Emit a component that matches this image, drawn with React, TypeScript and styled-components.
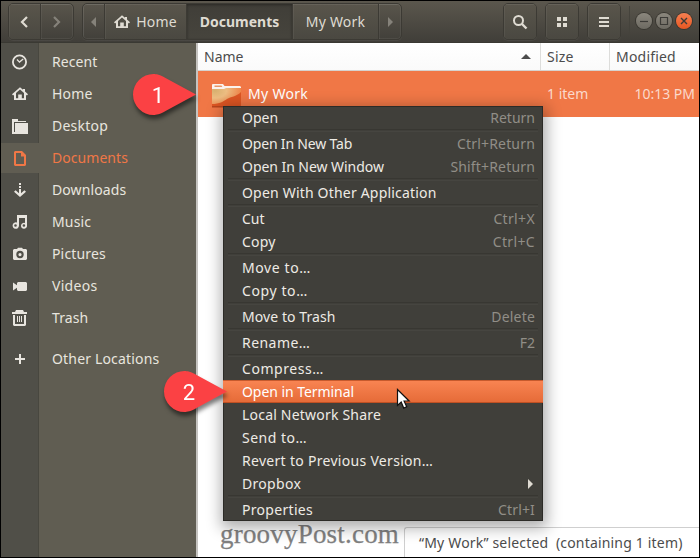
import React from 'react';
import styled, { createGlobalStyle, css } from 'styled-components';

const Global = createGlobalStyle`
  * { box-sizing: border-box; }
  body { margin: 0; background: #000; }
`;

const Frame = styled.div`
  position: relative;
  width: 700px;
  height: 558px;
  padding: 1px;
  background: #000;
  overflow: hidden;
  display: flex;
  flex-direction: column;
  font-family: 'Noto Sans', sans-serif;
  font-size: 14px;
  color: #4c4c4c;
  white-space: pre;
  cursor: default;
`;

const HeaderBar = styled.header`
  flex: none;
  height: 42px;
  display: flex;
  align-items: flex-start;
  padding: 2px 7px 0 7px;
  background: linear-gradient(#5b574d, #403e39);
  border-bottom: 1px solid #3a3933;
  color: #dfdbd2;
`;

const ButtonGroup = styled.div<{ $left?: number }>`
  display: flex;
  height: 37px;
  margin-left: ${(p) => p.$left ?? 0}px;
  border: 1px solid #3c3a34;
  border-radius: 5px;
  box-shadow: inset 0 0 0 1px rgba(255, 255, 255, 0.06), 0 1px 0 rgba(255, 255, 255, 0.05);
  overflow: hidden;
`;

const HeaderButton = styled.button<{ $w: number; $tone?: 'raised' | 'active' | 'flat' }>`
  width: ${(p) => p.$w}px;
  height: 35px;
  padding: 0;
  border: 0;
  border-right: 1px solid #3c3a34;
  display: flex;
  align-items: center;
  justify-content: center;
  gap: 6px;
  font: inherit;
  color: #dfdbd2;
  background: ${(p) => (p.$tone === 'flat' ? 'transparent' : 'linear-gradient(#59554b, #4a4841)')};
  box-shadow: inset 0 1px 0 rgba(255, 255, 255, 0.08), inset 1px 0 0 rgba(255, 255, 255, 0.05);
  &:last-child { border-right: 0; }
  ${(p) => p.$tone === 'active' && css`
    font-weight: 700;
    background: linear-gradient(#403e38, #46443d);
    box-shadow: inset 0 1px 3px rgba(0, 0, 0, 0.35);
  `}
`;

const Label = styled.span<{ $ls?: number }>`
  letter-spacing: ${(p) => p.$ls ?? 0}px;
  line-height: 20px;
`;

const Spacer = styled.div`
  flex: 1;
`;

const WindowControls = styled.div`
  display: flex;
  align-items: center;
  gap: 4px;
  height: 30px;
  margin: 3px 0 0 8px;
  padding-left: 6px;
  border-left: 1px solid #45433c;
`;

const ControlButton = styled.span<{ $close?: boolean }>`
  width: 16px;
  height: 16px;
  border-radius: 50%;
  background: ${(p) => (p.$close ? 'linear-gradient(#f77f51, #e65722)' : 'linear-gradient(#8b877d, #6d6a62)')};
  box-shadow: 0 0 0 1px #393731;
  display: flex;
`;

const Body = styled.div`
  flex: none;
  height: 514px;
  display: flex;
`;

const Sidebar = styled.nav`
  width: 195px;
  flex: none;
  padding-top: 4px;
  display: flex;
  flex-direction: column;
  gap: 2px;
  background: linear-gradient(90deg, #504f48 37px, #48473f 37px, #48473f 38px, #605d52 38px);
`;

const Place = styled.a<{ $selected?: boolean; $top?: number }>`
  height: 30px;
  margin-top: ${(p) => p.$top ?? 0}px;
  display: flex;
  align-items: center;
  color: ${(p) => (p.$selected ? '#f07746' : '#e8e5df')};
  background: ${(p) => (p.$selected ? '#605d52' : 'transparent')};
  svg { margin: 0 24px 0 11px; flex: none; }
`;

const Content = styled.main`
  flex: 1;
  min-width: 0;
  border-left: 2px solid #c5c3c0;
  background: #fff;
  display: flex;
  flex-direction: column;
`;

const Columns = styled.div`
  height: 28px;
  flex: none;
  display: grid;
  grid-template-columns: 343px 69px 1fr;
  border-bottom: 1px solid #d6d3cf;
  background: linear-gradient(#fff, #fafafa);
`;

const Column = styled.div`
  display: flex;
  align-items: center;
  justify-content: space-between;
  padding: 0 9px 0 6px;
  border-right: 1px solid #dddddb;
  &:last-child { border-right: 0; }
`;

const FileRow = styled.div`
  height: 46px;
  flex: none;
  display: grid;
  grid-template-columns: 343px 69px 1fr;
  align-items: center;
  background: #f07746;
  color: #fff;
`;

const FileName = styled.div`
  display: flex;
  align-items: center;
  padding-left: 13px;
  gap: 5px;
`;

const FileMeta = styled.div<{ $right?: boolean }>`
  color: #fbd9cb;
  padding-left: 6px;
  padding-right: 4px;
  text-align: ${(p) => (p.$right ? 'right' : 'left')};
`;

const Bottom = styled.div`
  flex: 1;
  display: flex;
  align-items: flex-end;
`;

const Watermark = styled.div`
  width: 206px;
  padding: 0 0 6px 22px;
  font-family: 'Liberation Serif', serif;
  font-size: 27px;
  letter-spacing: 0.2px;
  line-height: 34px;
  color: #808080;
  -webkit-text-stroke: 0.25px #808080;
`;

const StatusBar = styled.div`
  flex: 1;
  height: 30px;
  border-top: 1px solid #cfcfcf;
  border-left: 1px solid #cfcfcf;
  border-top-left-radius: 3px;
  padding: 5px 0 0 14px;
`;

const Menu = styled.div`
  position: absolute;
  left: 223px;
  top: 106px;
  width: 320px;
  isolation: isolate;
  background: #403f3a;
  box-shadow: 1px 4px 14px 3px rgba(0, 0, 0, 0.32);
  &::after {
    content: '';
    position: absolute;
    inset: 0;
    border: 1px solid rgba(38, 37, 33, 0.75);
    pointer-events: none;
  }
`;

const MenuItem = styled.div<{ $active?: boolean }>`
  height: 23px;
  display: flex;
  align-items: center;
  justify-content: space-between;
  padding: 0 8px 0 19px;
  color: #eeebe5;
  ${(p) => p.$active && css`
    color: #fff;
    background: linear-gradient(#f98553, #e56a37);
    box-shadow: inset 0 1px 0 #c65a2d, inset 0 -1px 0 #c05023;
    position: relative;
    z-index: 1;
  `}
`;

const Shortcut = styled(Label)`
  color: #918e87;
`;

const Separator = styled.div`
  height: 3px;
  margin: 0 5px;
  border-top: 1px solid #383732;
  border-bottom: 1px solid #464540;
`;

const Marker = styled.svg<{ $x: number; $y: number }>`
  position: absolute;
  left: ${(p) => p.$x}px;
  top: ${(p) => p.$y}px;
  overflow: visible;
  filter: drop-shadow(1px 4px 2px rgba(0, 0, 0, 0.5));
  text { font: 22px Roboto, sans-serif; fill: #fff; }
`;

const Pointer = styled.svg`
  position: absolute;
  left: 396px;
  top: 388px;
`;

const HomeIcon = () => (
  <svg width="16" height="16" viewBox="0 0 16 16" fill="currentColor" fillRule="evenodd">
    <path d="M8 1.2 11 3.8V3h2v2.6l3 2.7-1.1 1.2L14 8.7V14H2V8.7l-.9.8L0 8.3zM8 3.6 4 7v5.2h2.2V8.4h3.6v3.8H12V7z" />
  </svg>
);

const placeIcons: Record<string, React.ReactNode> = {
  Recent: <><circle cx="7.5" cy="8" r="6.6" fill="none" stroke="currentColor" strokeWidth="1.8" /><path d="m5 5.5 2.5 2.6L11.2 5" fill="none" stroke="currentColor" strokeWidth="1.3" /></>,
  Desktop: <path d="M0 1h6v2h8v1H2v10h1V5h13v11H0z" />,
  Documents: <path fillRule="evenodd" d="M3 1h7l4 4v10l-1 1H3l-1-1V2zM4 3v11h8V6.5H9V3z" />,
  Downloads: <path d="M7 1h2v2H7zM7 4h2v2H7zM7 7h2v4.3l3.4-3.1L14 9.7l-6 5.4-6-5.4 1.6-1.5L7 11.3z" />,
  Music: <path fillRule="evenodd" d="M5 1h10v10.5A3 3 0 1 1 13 9V4H7v7.5A3.2 3.2 0 1 1 5 8.6zM3.5 10.2a1.2 1.2 0 1 0 0 2.6 1.2 1.2 0 0 0 0-2.6zm8.4 0a1.2 1.2 0 1 0 0 2.6 1.2 1.2 0 0 0 0-2.6z" />,
  Pictures: <path fillRule="evenodd" d="M5 3 6 1.7h4L11 3h3l1 1v9l-1 1H2l-1-1V4l1-1zM8 4.8a3.7 3.7 0 1 0 0 7.4 3.7 3.7 0 0 0 0-7.4zM8 7a1.6 1.6 0 1 1 0 3.2A1.6 1.6 0 0 1 8 7z" />,
  Videos: <path d="M6 4h8l1 1v7l-1 1H6l-1-1V9.7L1 12.5v-8l4 2.8V5z" />,
  Trash: <path fillRule="evenodd" d="M4 0h7l1 2h3v2H0V2h3zM1 5h13v10l-1 1H2l-1-1zM3 5v9h9V5zM5 6h1v6H5zM7 6h1v6H7zM9 6h1v6H9z" />,
  'Other Locations': <path d="M7 3h2v4h4v2H9v4H7V9H3V7h4z" />,
};

const PlaceIcon = ({ name }: { name: string }) =>
  name === 'Home' ? <HomeIcon /> : (
    <svg width="16" height="16" viewBox="0 0 16 16" fill="currentColor">{placeIcons[name]}</svg>
  );

const FolderIcon = () => (
  <svg width="32" height="32" viewBox="0 0 32 32">
    <defs>
      <radialGradient id="folder" cx="0.1" cy="0.15" r="1">
        <stop offset="0" stopColor="#d7b06f" />
        <stop offset="0.4" stopColor="#edbd82" />
        <stop offset="1" stopColor="#ef7a3e" />
      </radialGradient>
    </defs>
    <path d="M1 12V6.5L2 6h10l1.5 2H29l1 1v3z" fill="#fbf3ee" />
    <path d="M3.5 7.5h7l.8 1.6H3.5z" fill="#e89566" />
    <path d="M1 11h12l2-1h15v18H1z" fill="url(#folder)" />
    <path d="M1 26c8 0 11-2.5 15-5s9-2 14-7v14H1z" fill="#dd5523" />
    <path d="M1 28h29v1.5H1z" fill="#b8451d" />
  </svg>
);

const places: { name: string; ls?: number; top?: number }[] = [
  { name: 'Recent', ls: 0.1 }, { name: 'Home', ls: 0.2 }, { name: 'Desktop', ls: 0.25 },
  { name: 'Documents', ls: 0.05 }, { name: 'Downloads', ls: 0.1 }, { name: 'Music', ls: 0.15 },
  { name: 'Pictures', ls: 0.15 }, { name: 'Videos', ls: 0.3 }, { name: 'Trash', ls: 0.1 },
  { name: 'Other Locations', ls: 0.17, top: 9 },
];

type Entry = { label: string; keys?: string; ls?: number; kls?: number; submenu?: boolean };

const menuGroups: Entry[][] = [
  [{ label: 'Open', keys: 'Return' }],
  [{ label: 'Open In New Tab', ls: -0.18, keys: 'Ctrl+Return', kls: 0.18 },
    { label: 'Open In New Window', ls: -0.05, keys: 'Shift+Return', kls: 0.17 }],
  [{ label: 'Open With Other Application', ls: 0.19 }],
  [{ label: 'Cut', keys: 'Ctrl+X', kls: 0.35 }, { label: 'Copy', ls: 0.2, keys: 'Ctrl+C', kls: 0.35 }],
  [{ label: 'Move to…', ls: 0.6 }, { label: 'Copy to…', ls: 0.6 }],
  [{ label: 'Move to Trash', ls: 0.08, keys: 'Delete', kls: 0.2 }],
  [{ label: 'Rename…', ls: 0.45, keys: 'F2' }],
  [{ label: 'Compress…', ls: 0.55 }, { label: 'Open in Terminal', ls: -0.06 },
    { label: 'Local Network Share', ls: 0.2 }, { label: 'Send to…', ls: 0.5 },
    { label: 'Revert to Previous Version…', ls: 0.3 }, { label: 'Dropbox', ls: 0.3, submenu: true }],
  [{ label: 'Properties', ls: 0.3, keys: 'Ctrl+I', kls: 0.15 }],
];

const Callout = ({ x, y, n }: { x: number; y: number; n: number }) => (
  <Marker $x={x} $y={y} width="63" height="42" viewBox="0 0 63 42">
    <path d="M63 20.5 33 36.8C27 40.5 23 41 20.5 41A20.5 20.5 0 0 1 20.5 0C23 0 27 .5 33 4.2z" fill="#fb4144" />
    <text x="25" y="29" textAnchor="middle">{n}</text>
  </Marker>
);

export default function App() {
  return (
    <Frame>
      <Global />
      <HeaderBar>
        <ButtonGroup>
          <HeaderButton $w={32}>
            <svg width="14" height="14" viewBox="0 0 14 14"><path d="M9 2 4 7l5 5" fill="none" stroke="#dfdbd2" strokeWidth="2.2" /></svg>
          </HeaderButton>
          <HeaderButton $w={32} $tone="flat">
            <svg width="12" height="14" viewBox="0 0 12 14"><path d="m3 2 5 5-5 5" fill="none" stroke="#85827a" strokeWidth="2.2" /></svg>
          </HeaderButton>
        </ButtonGroup>
        <ButtonGroup $left={8}>
          <HeaderButton $w={22} $tone="flat">
            <svg width="6" height="10" viewBox="0 0 6 10"><path d="M5 0v10L0 5z" fill="#85827a" /></svg>
          </HeaderButton>
          <HeaderButton $w={82}><HomeIcon /><Label $ls={0.2}>Home</Label></HeaderButton>
          <HeaderButton $w={106} $tone="active"><Label>Documents</Label></HeaderButton>
          <HeaderButton $w={86}><Label $ls={0.2}>My Work</Label></HeaderButton>
          <HeaderButton $w={22} $tone="flat">
            <svg width="6" height="10" viewBox="0 0 6 10"><path d="M1 0v10l5-5z" fill="#85827a" /></svg>
          </HeaderButton>
        </ButtonGroup>
        <Spacer />
        <ButtonGroup>
          <HeaderButton $w={32}>
            <svg width="16" height="16" viewBox="0 0 16 16" fill="none" stroke="#dfdbd2"><circle cx="6.5" cy="6.5" r="4.5" strokeWidth="2" /><path d="m10 10 4.5 4.5" strokeWidth="2.4" /></svg>
          </HeaderButton>
        </ButtonGroup>
        <ButtonGroup $left={8}>
          <HeaderButton $w={32}>
            <svg width="10" height="10" viewBox="0 0 10 10" fill="#dfdbd2"><path d="M0 0h4v4H0zM6 0h4v4H6zM0 6h4v4H0zM6 6h4v4H6z" /></svg>
          </HeaderButton>
        </ButtonGroup>
        <ButtonGroup $left={8}>
          <HeaderButton $w={32}>
            <svg width="10" height="10" viewBox="0 0 10 10" fill="#dfdbd2"><path d="M0 0h10v2H0zM0 4h10v2H0zM0 8h10v2H0z" /></svg>
          </HeaderButton>
        </ButtonGroup>
        <WindowControls>
          <ControlButton><svg width="16" height="16"><path d="M4 8.5h8" stroke="#3c3b37" strokeWidth="1.2" /></svg></ControlButton>
          <ControlButton><svg width="16" height="16"><path d="M4.5 4.5h7v7h-7z" fill="none" stroke="#3c3b37" strokeWidth="1.2" /></svg></ControlButton>
          <ControlButton $close><svg width="16" height="16"><path d="m5 5 6 6m0-6-6 6" stroke="#3c3b37" strokeWidth="1.4" /></svg></ControlButton>
        </WindowControls>
      </HeaderBar>
      <Body>
        <Sidebar>
          {places.map((p) => (
            <Place key={p.name} $selected={p.name === 'Documents'} $top={p.top}>
              <PlaceIcon name={p.name} />
              <Label $ls={p.ls}>{p.name}</Label>
            </Place>
          ))}
        </Sidebar>
        <Content>
          <Columns>
            <Column><Label>Name</Label><svg width="10" height="5" viewBox="0 0 10 5"><path d="M0 5h10L5 0z" fill="#4c4c4c" /></svg></Column>
            <Column><Label $ls={0.2}>Size</Label></Column>
            <Column><Label $ls={0.2}>Modified</Label></Column>
          </Columns>
          <FileRow>
            <FileName><FolderIcon /><Label $ls={0.3}>My Work</Label></FileName>
            <FileMeta><Label>1 item</Label></FileMeta>
            <FileMeta $right><Label>10:13 PM</Label></FileMeta>
          </FileRow>
          <Bottom>
            <Watermark>groovyPost.com</Watermark>
            <StatusBar><Label $ls={0.18}>“My Work” selected  (containing 1 item)</Label></StatusBar>
          </Bottom>
        </Content>
      </Body>
      <Menu>
        {menuGroups.map((group, i) => (
          <React.Fragment key={i}>
            {i > 0 && <Separator />}
            {group.map((e) => (
              <MenuItem key={e.label} $active={e.label === 'Open in Terminal'}>
                <Label $ls={e.ls}>{e.label}</Label>
                {e.keys && <Shortcut $ls={e.kls}>{e.keys}</Shortcut>}
                {e.submenu && <svg width="8" height="10" viewBox="0 0 8 10"><path d="M1 0v10l5-5z" fill="#dfdbd2" /></svg>}
              </MenuItem>
            ))}
          </React.Fragment>
        ))}
      </Menu>
      <Callout x={133} y={74} n={1} />
      <Callout x={164} y={371} n={2} />
      <Pointer width="16" height="22" viewBox="0 0 16 22">
        <path d="M1.5 1.5v16l3.7-3.4 2.5 6 3-1.3-2.6-5.8h5z" fill="#fff" stroke="#111" strokeWidth="1.2" />
      </Pointer>
    </Frame>
  );
}
